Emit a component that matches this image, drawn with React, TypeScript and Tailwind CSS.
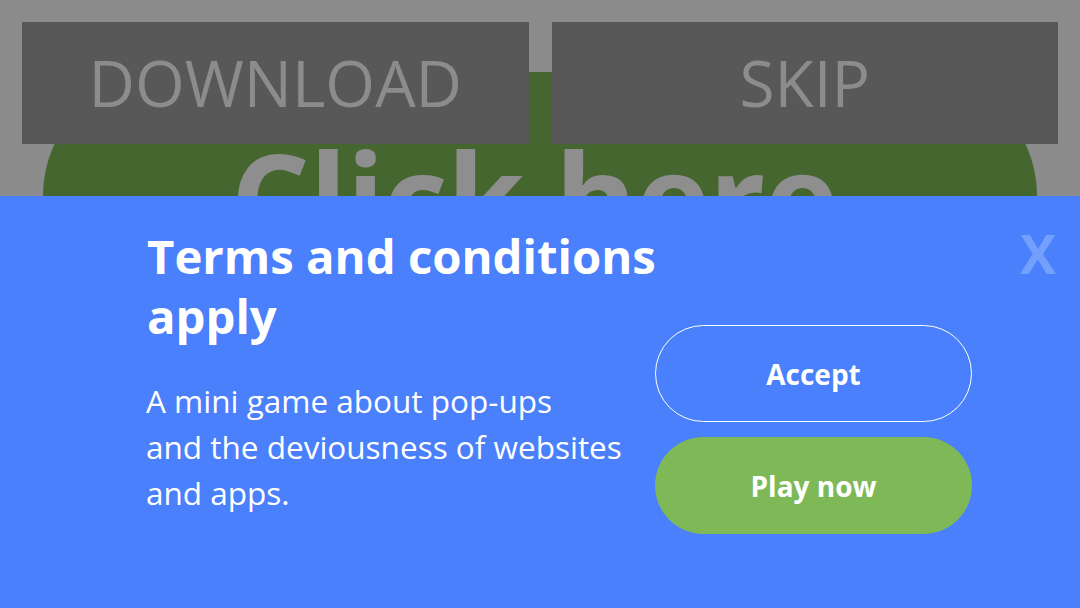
import React from "react";

const font = { fontFamily: '"Open Sans", "Noto Sans", sans-serif' };

function Backdrop() {
  return (
    <div className="relative h-[196px] overflow-hidden bg-[#8c8c8c]">
      {/* the big green call-to-action behind the fake buttons */}
      <div className="absolute left-[43px] top-[72px] flex h-[248px] w-[994px] items-center justify-center rounded-full bg-[#466630] pr-[12px]">
        <span className="whitespace-nowrap text-[125px] font-bold leading-none tracking-[-1px] text-[#8e8e8e]">Click here</span>
      </div>
      <div className="relative grid grid-cols-2 gap-[23px] px-[22px] pt-[22px]">
        <div className="flex h-[122px] items-center justify-center bg-[#585858] text-[64px] leading-none text-[#8c8c8c]">
          DOWNLOAD
        </div>
        <div className="flex h-[122px] items-center justify-center bg-[#585858] text-[64px] leading-none text-[#8c8c8c]">
          SKIP
        </div>
      </div>
    </div>
  );
}

function Sheet() {
  return (
    <div className="relative flex h-[412px] bg-[#4a80fb] text-white">
      <div className="w-[655px] whitespace-nowrap pl-[146px] pt-[30px]">
        <h1 className="pl-[1px] text-[47.3px] font-bold leading-[60px]">
          Terms and conditions
          <br />
          apply
        </h1>
        <p className="mt-[32px] text-[31.5px] leading-[46px]">
          A mini game about pop-ups
          <br />
          and the deviousness of websites
          <br />
          and apps.
        </p>
      </div>
      <div className="flex flex-col gap-[15px] pt-[129px]">
        <button className="flex h-[97px] w-[317px] items-center justify-center rounded-full border-[1.5px] border-white text-[28px] font-bold text-white">
          Accept
        </button>
        <button className="flex h-[97px] w-[317px] items-center justify-center rounded-full bg-[#7fb957] text-[28px] font-bold text-white">
          Play now
        </button>
      </div>
      <button className="absolute right-[24px] top-[30px] text-[54px] font-bold leading-none text-[#72a0fc]">
        X
      </button>
    </div>
  );
}

export default function App() {
  return (
    <div className="h-[608px] w-[1080px] overflow-hidden" style={font}>
      <Backdrop />
      <Sheet />
    </div>
  );
}
